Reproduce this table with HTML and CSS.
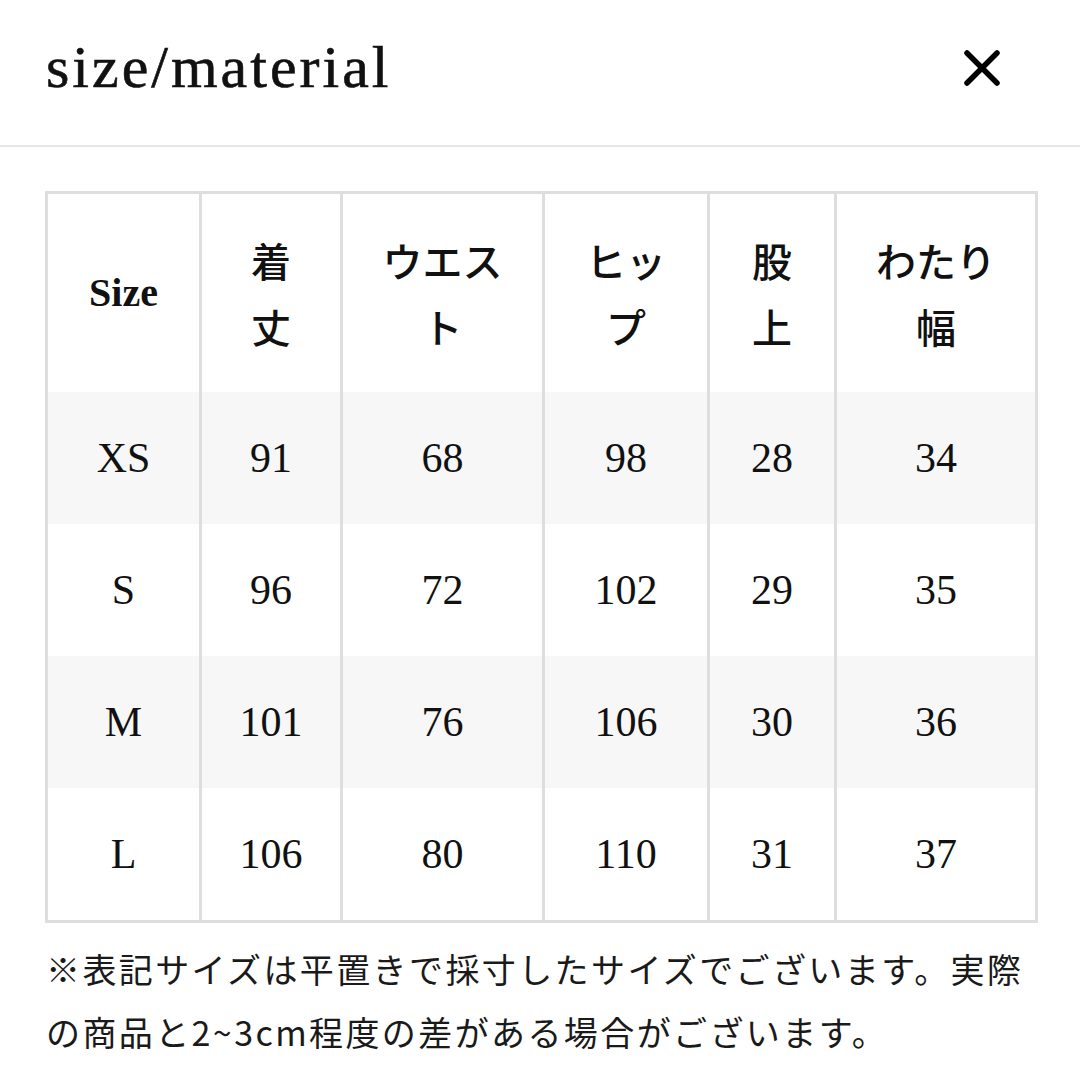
FILE: index.html
```html
<!DOCTYPE html>
<html lang="ja">
<head>
<meta charset="utf-8">
<title>size/material</title>
<link rel="stylesheet" href="styles.css">
</head>
<body>
<div class="sheet">
  <header class="sheet-header">
    <h1 class="sheet-title">size/material</h1>
    <button class="close-btn" aria-label="close">
      <svg width="36" height="36" viewBox="0 0 36 36"><path d="M3 3 L33 33 M33 3 L3 33" stroke="#000" stroke-width="5.5" stroke-linecap="round" fill="none"/></svg>
    </button>
  </header>
  <table class="size-table">
    <colgroup>
      <col class="c1"><col class="c2"><col class="c3"><col class="c4"><col class="c5"><col class="c6">
    </colgroup>
    <thead>
      <tr>
        <th class="latin">Size</th>
        <th>着丈</th>
        <th>ウエスト</th>
        <th>ヒップ</th>
        <th>股上</th>
        <th>わたり幅</th>
      </tr>
    </thead>
    <tbody>
      <tr class="shade"><td>XS</td><td>91</td><td>68</td><td>98</td><td>28</td><td>34</td></tr>
      <tr><td>S</td><td>96</td><td>72</td><td>102</td><td>29</td><td>35</td></tr>
      <tr class="shade"><td>M</td><td>101</td><td>76</td><td>106</td><td>30</td><td>36</td></tr>
      <tr><td>L</td><td>106</td><td>80</td><td>110</td><td>31</td><td>37</td></tr>
    </tbody>
  </table>
  <p class="note">※表記サイズは平置きで採寸したサイズでございます。実際の商品と2~3cm程度の差がある場合がございます。</p>
</div>
</body>
</html>
```

FILE: styles.css
```css
html, body {
  margin: 0;
  padding: 0;
  background: #fff;
}
body {
  width: 1080px;
  height: 1080px;
  overflow: hidden;
  color: #111;
}
.sheet-header {
  height: 145px;
  display: flex;
  align-items: center;
  justify-content: space-between;
  padding: 0 80px 0 46px;
  border-bottom: 2px solid #e6e6e6;
}
.sheet-title {
  margin: -12px 0 0 0;
  font-family: "Liberation Serif", "Times New Roman", serif;
  font-weight: 400;
  font-size: 60px;
  letter-spacing: 3px;
  color: #111;
  line-height: 1;
  -webkit-text-stroke: 0.6px #111;
}
.close-btn {
  border: 0;
  background: none;
  padding: 0;
  width: 36px;
  height: 36px;
  display: flex;
  margin-top: -10px;
}
.size-table {
  margin: 44px 0 0 45px;
  width: 990px;
  border-collapse: collapse;
  table-layout: fixed;
  border: 3px solid #dedede;
}
.c1 { width: 154px; }
.c2 { width: 141px; }
.c3 { width: 202px; }
.c4 { width: 165px; }
.c5 { width: 127px; }
.c6 { width: 201px; }
.size-table th,
.size-table td {
  border-left: 3px solid #dedede;
  border-right: 3px solid #dedede;
  text-align: center;
  vertical-align: middle;
  padding: 0 36px;
}
.size-table th {
  height: 198px;
  font-family: "Noto Sans CJK JP", sans-serif;
  font-weight: 500;
  font-size: 40px;
  line-height: 66px;
  color: #111;
}
.size-table th.latin {
  font-family: "Liberation Serif", "Times New Roman", serif;
  font-weight: 700;
  font-size: 40px;
  padding: 0 10px;
}
.size-table td {
  height: 132px;
  padding: 0 10px;
  font-family: "Liberation Serif", "Times New Roman", serif;
  font-size: 42px;
  color: #111;
}
.size-table tr.shade td {
  background: #f7f7f7;
}
.note {
  margin: 14px 0 0 0;
  padding: 0 30px 0 46px;
  font-family: "Noto Sans CJK JP", sans-serif;
  font-size: 34px;
  letter-spacing: 2.4px;
  line-height: 63px;
  color: #1a1a1a;
}
```
